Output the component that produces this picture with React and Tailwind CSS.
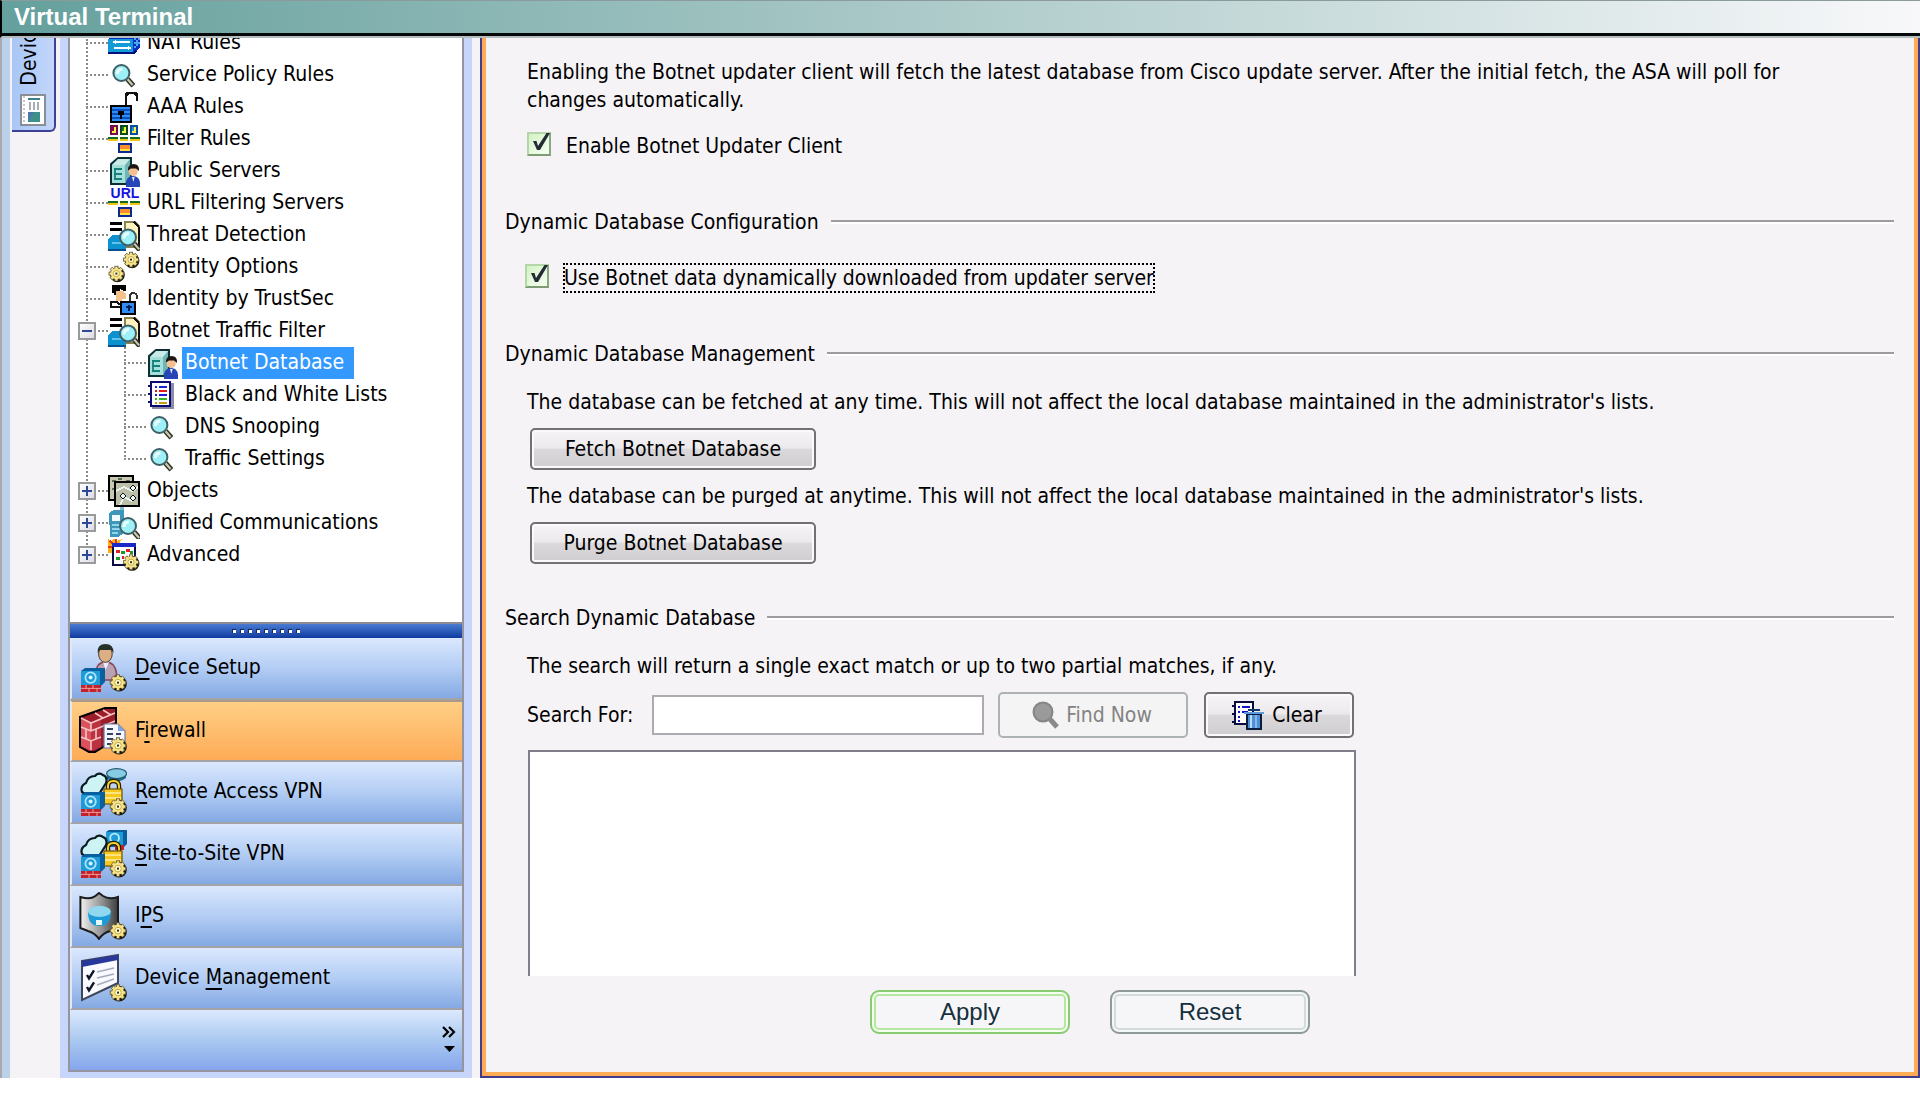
import { useState } from 'react';
import clsx from 'clsx';

// ---------- shared icon parts ----------

function Gear({ cx, cy, r = 3 }) {
  const teeth = [0, 45, 90, 135, 180, 225, 270, 315];
  return (
    <g transform={`translate(${cx} ${cy})`} shapeRendering="auto">
      <circle cx={0.5} cy={0.6} r={r + 0.9} fill="#1c1a12" />
      {teeth.map((a) => (
        <rect key={a} x={-0.8} y={-r - 0.9} width={1.6} height={2} fill="#f3e08c" stroke="#5c5330" strokeWidth={0.4} transform={`rotate(${a})`} />
      ))}
      <circle r={r} fill="#f5e389" />
      <circle r={r * 0.55} fill="#fffbd6" stroke="#c9a93a" strokeWidth={0.5} />
      <rect x={-0.5} y={-0.5} width={1} height={1} fill="#3a3005" />
    </g>
  );
}

function Lens({ cx, cy, r = 4 }) {
  const d = r * 0.75;
  return (
    <g shapeRendering="auto">
      <path d={`M${cx + d} ${cy + d}l3 3.400`} stroke="#2f3326" strokeWidth={2.6} />
      <path d={`M${cx + d} ${cy + d}l2.600 3`} stroke="#c9c9b4" strokeWidth={1.1} />
      <circle cx={cx} cy={cy} r={r} fill="#9df0f6" stroke="#3f5f66" strokeWidth={1} />
      <path d={`M${cx - 2} ${cy + 0.5}q0 -2.500 2.500 -2.500`} fill="none" stroke="#eaffff" strokeWidth={1.6} />
    </g>
  );
}

function Icon16({ children }) {
  return (
    <svg viewBox="0 0 16 16" className="size-8 shrink-0" shapeRendering="crispEdges" aria-hidden="true">
      {children}
    </svg>
  );
}

function Icon24({ children }) {
  return (
    <svg viewBox="0 0 24 24" className="size-12 shrink-0" aria-hidden="true">
      {children}
    </svg>
  );
}

// ---------- tree icons ----------

const NatIcon = () => (
  <Icon16>
    <path d="M0 6l3-3h13v7l-3 3.500H0z" fill="#0b2fc4" />
    <path d="M0 6h12.500v6.500H0z" fill="#139bd8" />
    <path d="M13 5.500h1v1h1v-1h1v1h-1v1h1v1h-1v1h-1v1h-1v-1h1v-1h-1v-1h1v-1h-1z" fill="#49a7ee" />
    <path d="M3 7.500h8M3 10.500h8" stroke="#fff" strokeWidth="1" />
    <path d="M2 7.500l2-1v2zM12 10.500l-2-1v2z" fill="#fff" />
    <path d="M0 13h13l1-1" stroke="#00107c" fill="none" />
  </Icon16>
);

const SearchIcon = () => (
  <Icon16>
    <Lens cx={6.7} cy={7} r={4} />
  </Icon16>
);

const LockIcon = () => (
  <Icon16>
    <path d="M9 7V2.500q0-1.500 1.500-1.500h2.500q1.500 0 1.500 1.500V5" fill="none" stroke="#111" strokeWidth="1.400" />
    <rect x="1.500" y="7.500" width="10" height="8" fill="#2f8cf5" stroke="#000" />
    <path d="M2 9.500h9M2 11.500h9M2 13.500h9" stroke="#0a4fc0" strokeWidth=".6" />
    <path d="M5 10h3v2h-1v2h-1v-2h-1z" fill="#000" />
  </Icon16>
);

const FilterLine = () => (
  <g>
    <path d="M0 7.500h5M6 7.500h4M11 7.500h5" stroke="#0f6b1f" />
    <path d="M0 8.400h5M6 8.400h4M11 8.400h5" stroke="#f0c419" strokeWidth=".9" />
    <rect x="5.500" y="10.500" width="6" height="4" fill="#ffe23a" stroke="#0b2a94" />
    <rect x="6" y="11" width="5" height="2" fill="#ff8b2c" />
  </g>
);

const FilterIcon = () => (
  <Icon16>
    <rect x="1.500" y="1.500" width="3" height="4" fill="#fff04a" stroke="#7b0a4f" />
    <rect x="6.500" y="1.500" width="3" height="4" fill="#fff04a" stroke="#0a4b1a" />
    <rect x="11.500" y="1.500" width="3" height="4" fill="#fff04a" stroke="#0a4e9d" />
    <path d="M2 2h1v2H2z" fill="#7b0a4f" />
    <path d="M7 2h1v2H7z" fill="#0a7b2a" />
    <path d="M12 2h1v2h-1z" fill="#2a8ee0" />
    <FilterLine />
  </Icon16>
);

const ServerIcon = () => (
  <Icon16>
    <g shapeRendering="auto">
      <path d="M1.500 4.500L5 1.500h6.500V12L9 14.500H1.500z" fill="#6fb5b5" stroke="#0c2f33" />
      <path d="M2 5h6.500v9H2z" fill="#a3dfdb" />
      <path d="M5 2h6L8.500 5H2.200z" fill="#c9ebe8" />
      <path d="M3 7h4M3 9.500h4M3 12h4M3.500 7v5" stroke="#16807c" strokeWidth=".9" fill="none" />
      <path d="M9 16q-.5-5.500 3.500-5.500T16 16z" fill="#2546b4" />
      <circle cx="12.600" cy="8.200" r="2.300" fill="#f3bf93" />
      <path d="M10 7.800Q9.800 4.500 12.800 4.500T15.500 8L14 6.700h-2.500z" fill="#1d1512" />
      <path d="M12 11h1.300l-.6 2.500z" fill="#e8eeff" />
    </g>
  </Icon16>
);

const UrlIcon = () => (
  <Icon16>
    <text x="8.500" y="5.700" textAnchor="middle" fontSize="7" fontWeight="700" fill="#1414e0" fontFamily="Liberation Sans, sans-serif">
      URL
    </text>
    <FilterLine />
  </Icon16>
);

const ThreatIcon = () => (
  <Icon16>
    <path d="M1 1.500h6v1.500H1zM1 4.500h6V6H1z" fill="#000" />
    <path d="M8.500 1.500h5l2 2V14h-7z" fill="#fff3bd" stroke="#8a8250" />
    <path d="M13 1.500l2.500 2.500M15.500 4v10" stroke="#111" />
    <path d="M2 8h7v7.500H0V10z" fill="#0c93cf" />
    <path d="M0 15.500h9" stroke="#08508c" />
    <path d="M2 12h5" stroke="#5cc4ee" />
    <Lens cx={10} cy={9.2} r={4} />
  </Icon16>
);

const GearsIcon = () => (
  <Icon16>
    <Gear cx={11.5} cy={4.3} r={2.8} />
    <Gear cx={4.2} cy={11.3} r={2.8} />
  </Icon16>
);

const TrustSecIcon = () => (
  <Icon16>
    <path d="M2 1h7v3H8L6 3v3H3V5H2z" fill="#000" />
    <path d="M4 4h4v1h1v3H7v1H4z" fill="#f5c08a" />
    <path d="M1.500 12V9.500h3L6 11" fill="none" stroke="#111" />
    <path d="M1 12h5" stroke="#111" />
    <path d="M11 9V6.500Q11 5 12.500 5t2 1.500V8" fill="none" stroke="#333" />
    <rect x="6.500" y="9.500" width="7" height="6" fill="#2f8cf5" stroke="#000" />
    <path d="M9 12h3M10.500 11v3" stroke="#021f57" />
  </Icon16>
);

const ListIcon = () => (
  <Icon16>
    <path d="M3 2h11v13H3z" fill="#8b8ba5" />
    <path d="M2.500 1.500h9.500v12H2.500z" fill="#fff" stroke="#0b0b73" />
    <path d="M1 3.500h2M1 7.500h2M1 11.500h2" stroke="#0b0b73" />
    <path d="M4.500 4h1M6.500 4h4" stroke="#2020d8" />
    <path d="M4.500 6h1M6.500 6h4" stroke="#e31b1b" />
    <path d="M4.500 8h1M6.500 8h4" stroke="#1c1cd8" />
    <path d="M4.500 10h1M6.500 10h4" stroke="#35b821" />
    <path d="M4.500 12h1M6.500 12h4" stroke="#c5a112" />
  </Icon16>
);

const ObjectsIcon = () => (
  <Icon16>
    <rect x=".5" y=".5" width="12" height="12" fill="#c8c8ae" stroke="#000" />
    <path d="M2 3h2M5 2h2M9 3h2M2 7h1" stroke="#5b6e5b" />
    <rect x="3.500" y="3.500" width="12" height="12" fill="#bcc0a8" stroke="#000" />
    <path d="M4 8l4-2 4 2 3-2M6 15l2-4 4 2" stroke="#eef4ee" fill="none" />
    <path d="M12.500 5l1.500 1.500L12.500 8 11 6.500zM7.500 9L9 10.500 7.500 12 6 10.500zM12.500 10l1.500 1.500-1.500 1.500-1.500-1.500z" fill="#eafcff" stroke="#111" strokeWidth=".6" />
  </Icon16>
);

const PhoneIcon = () => (
  <Icon16>
    <path d="M6 0h2v3H6z" fill="#7bbbe0" />
    <path d="M.5 3L3 1.500h5V13L5 15H1z" fill="#3e96b8" />
    <path d="M2 4h4v3H2z" fill="#f1fbff" />
    <path d="M2 9h4M2 11h4M2 13h3" stroke="#8fd5ec" strokeWidth=".8" />
    <Lens cx={10} cy={9.5} r={4} />
  </Icon16>
);

const AdvancedIcon = () => (
  <Icon16>
    <path d="M0 0l2 1 1-2 1 2 3-1-2 3-3 2v2H0V4z" fill="#f7b21a" />
    <path d="M1 1l2 2M4 0v3M0 4h3" stroke="#e6321e" strokeWidth=".8" />
    <rect x="2.500" y="2.500" width="11" height="10.500" fill="#fff" stroke="#0b0b46" />
    <path d="M2 3h12" stroke="#1a28c8" strokeWidth="1.600" />
    <path d="M4 6h2M9 5.500h2M7 9h1" stroke="#e32020" strokeWidth="1.500" />
    <path d="M6.500 6.500h2M4 9.500h2M11 6.500h1.500" stroke="#1b9b2c" strokeWidth="1.500" />
    <Gear cx={11.5} cy={11.6} r={2.8} />
  </Icon16>
);

// ---------- navigation icons ----------

const AsaBox = () => (
  <g>
    <path d="M1 13.500l2-1.500h10v7l-2 2H1z" fill="#0a5f9e" />
    <path d="M1 13.500h9.500v7H1z" fill="#1e9bd7" />
    <circle cx="5.800" cy="16.800" r="2.600" fill="none" stroke="#a9e5ff" strokeWidth=".9" />
    <circle cx="5.800" cy="16.800" r="1" fill="#d9f5ff" />
    <path d="M1 20.500h10V24H1z" fill="#c3222b" />
    <path d="M1 22.200h10M3.500 20.500v1.700M7 20.500v1.700M5 22.200V24M9 22.200V24" stroke="#f6b9b4" strokeWidth=".4" />
  </g>
);

const Cloud = () => (
  <path d="M1.500 12q-1-3 2-4.500Q4.500 4 8 4q1.500-2 4-.5 2.500 1 1.500 4L10 13H3z" fill="#cdf3f5" stroke="#0a1c20" strokeWidth="1.100" />
);

const Padlock = () => (
  <g>
    <path d="M14.500 11V9q0-2.500 2.700-2.500T20 9v2" fill="none" stroke="#241c02" strokeWidth="2.200" />
    <path d="M14.500 11V9q0-2.500 2.700-2.500T20 9v2" fill="none" stroke="#f5cf2b" strokeWidth="1" />
    <rect x="12.500" y="10.500" width="9" height="7.500" fill="#f7c71f" stroke="#6f5204" strokeWidth=".6" />
    <path d="M13 12.500h8M13 15h8" stroke="#fff0a0" strokeWidth=".8" />
  </g>
);

const DeviceSetupIcon = () => (
  <Icon24>
    <path d="M8.500 15q0-6 4.800-6t5.500 6l-2 3h-6z" fill="#b9a2b4" stroke="#8b4656" strokeWidth=".8" />
    <path d="M12 9l1.300 4L15 9z" fill="#eef" />
    <ellipse cx="13.200" cy="5" rx="3.400" ry="4.200" fill="#dcae84" stroke="#4b3c30" strokeWidth=".5" />
    <path d="M9.300 4.500Q9 0 13.200 0t4.100 4.500L16 3h-5.500z" fill="#263026" />
    <AsaBox />
    <Gear cx={19.5} cy={19.3} r={3} />
  </Icon24>
);

const FirewallIcon = () => (
  <Icon24>
    <path d="M.5 5L13 .5h5.500V16L8 22.500H5L.5 20z" fill="#9c1c2a" stroke="#000" strokeWidth="1" />
    <path d="M1 6l5 2v14l-5-2.500z" fill="#d9525e" />
    <path d="M6 8l5-2v14l-5 2z" fill="#b8333f" />
    <path d="M1 10l5 2 5-2M1 15l5 2 5-2M1 5.500L6 8l12-5M6 8v4M3.500 11v5M8.500 11v5M6 17v4.500M8 3l4 2.500M12 1.500L16 4M11 10l7-3" fill="none" stroke="#f6c2c2" strokeWidth=".8" />
    <path d="M12.500 8.500h7l3.500 3.500v8.500H12.500z" fill="#f4f7ff" stroke="#6c7a9c" strokeWidth=".6" />
    <path d="M19.500 8.500V12H23z" fill="#7fa3dc" />
    <path d="M14 11h3M14 13.500h3M14 16h3M14 18.500h2M18.500 13.500h2.500" stroke="#38435f" strokeWidth="1" />
    <Gear cx={19.5} cy={19.3} r={3} />
  </Icon24>
);

const RemoteVpnIcon = () => (
  <Icon24>
    <path d="M14 3v2.500q4.500 3 9.500-.5V2.500z" fill="#1d6e94" />
    <ellipse cx="18.800" cy="2.800" rx="5" ry="2.500" fill="#86cbe4" stroke="#245a6e" strokeWidth=".6" />
    <Cloud />
    <Padlock />
    <AsaBox />
    <Gear cx={19.5} cy={19.3} r={3} />
  </Icon24>
);

const SiteVpnIcon = () => (
  <Icon24>
    <path d="M13.500 1l1.500-1h9v7l-1.500 1.500h-9z" fill="#0a5f9e" />
    <path d="M13.500 1H22v6.500h-8.500z" fill="#1e9bd7" />
    <circle cx="17.800" cy="4" r="2.200" fill="none" stroke="#b8eaff" strokeWidth=".9" />
    <path d="M18 7.500h4.500V10H18z" fill="#c3222b" />
    <Cloud />
    <Padlock />
    <AsaBox />
    <Gear cx={19.5} cy={19.3} r={3} />
  </Icon24>
);

const IpsIcon = () => (
  <Icon24>
    <defs>
      <linearGradient id="shield" x1="0" x2="1">
        <stop offset="0" stopColor="#f2f2f2" />
        <stop offset=".6" stopColor="#8c8c8c" />
        <stop offset="1" stopColor="#3c3c3c" />
      </linearGradient>
    </defs>
    <path d="M.7 2.500q5 1.500 7.500-.5L10 .5 12 2q3 2 7.500.5V18l-4 1.500q-3.500 1-5.500 4-2-3-5.500-4L.7 18z" fill="url(#shield)" stroke="#1c1c1c" strokeWidth="1" />
    <path d="M4.500 10q0 7 5.700 7t5.800-7z" fill="#1d9bd6" />
    <ellipse cx="10.200" cy="9.700" rx="5.700" ry="2.800" fill="#8fd8ef" />
    <path d="M8.500 16.500v-2.500h3v2.500" fill="#e6f8ff" />
    <Gear cx={19.5} cy={19.3} r={3} />
  </Icon24>
);

const DeviceMgmtIcon = () => (
  <Icon24>
    <path d="M1.500 3.500L19.500 .5v14L1.500 23z" fill="#f8faff" stroke="#3f465c" strokeWidth="1" />
    <path d="M1.500 3.500L19.500 .5V3L1.500 6.500z" fill="#27379b" />
    <path d="M4 10.500l1 1.700 2.500-4M4 16.500l1 1.700 2.500-4" fill="none" stroke="#0c1322" strokeWidth="1.200" />
    <path d="M9 9l8.500-2M9 12l8.500-2M9 15.500l8.500-3" stroke="#a3abbd" strokeWidth=".7" />
    <Gear cx={19.5} cy={19.3} r={3} />
  </Icon24>
);

// ---------- data ----------

const TREE = [
  { label: 'NAT Rules', icon: NatIcon },
  { label: 'Service Policy Rules', icon: SearchIcon },
  { label: 'AAA Rules', icon: LockIcon },
  { label: 'Filter Rules', icon: FilterIcon },
  { label: 'Public Servers', icon: ServerIcon },
  { label: 'URL Filtering Servers', icon: UrlIcon },
  { label: 'Threat Detection', icon: ThreatIcon },
  { label: 'Identity Options', icon: GearsIcon },
  { label: 'Identity by TrustSec', icon: TrustSecIcon },
  {
    label: 'Botnet Traffic Filter',
    icon: ThreatIcon,
    open: true,
    children: [
      { label: 'Botnet Database', icon: ServerIcon },
      { label: 'Black and White Lists', icon: ListIcon },
      { label: 'DNS Snooping', icon: SearchIcon },
      { label: 'Traffic Settings', icon: SearchIcon },
    ],
  },
  { label: 'Objects', icon: ObjectsIcon, open: false },
  { label: 'Unified Communications', icon: PhoneIcon, open: false },
  { label: 'Advanced', icon: AdvancedIcon, open: false },
];

// `key` is the index of the mnemonic letter
const SECTIONS = [
  { label: 'Device Setup', key: 0, icon: DeviceSetupIcon },
  { label: 'Firewall', key: 1, icon: FirewallIcon },
  { label: 'Remote Access VPN', key: 0, icon: RemoteVpnIcon },
  { label: 'Site-to-Site VPN', key: 0, icon: SiteVpnIcon },
  { label: 'IPS', key: 1, icon: IpsIcon },
  { label: 'Device Management', key: 7, icon: DeviceMgmtIcon },
];

const DOTS_X = 'bg-[repeating-linear-gradient(90deg,#8a8a8a_0_2px,transparent_2px_4px)]';
const DOTS_Y = 'bg-[repeating-linear-gradient(180deg,#8a8a8a_0_2px,transparent_2px_4px)]';

// ---------- sidebar ----------

// Dotted connector in front of a row, with the optional +/- box on top
function Branch({ open, last }) {
  return (
    <span className="relative flex h-8 w-[22px] shrink-0 items-center">
      <span className={clsx('absolute left-0 top-0 w-[2px]', DOTS_Y, last ? 'h-4' : 'h-8')} />
      <span className={clsx('h-[2px] w-full', DOTS_X)} />
      {open !== undefined && (
        <span className="absolute -left-2 top-[7px] flex size-[18px] items-center justify-center border-2 border-[#9a9a9a] bg-gradient-to-br from-white to-[#dcdce4]">
          <span className="absolute h-[2px] w-[10px] bg-[#2b4796]" />
          {!open && <span className="absolute h-[10px] w-[2px] bg-[#2b4796]" />}
        </span>
      )}
    </span>
  );
}

function TreeItem({ item, last, selected, onSelect }) {
  const Icon = item.icon;
  const active = selected === item.label;
  return (
    <li>
      <div className="flex h-8 items-center">
        <Branch open={item.open} last={last} />
        <Icon />
        <button
          onClick={() => onSelect(item.label)}
          className={clsx('ml-1 h-8 whitespace-nowrap pl-[3px] pr-[10px]', active && 'bg-[#3399ff] text-white')}
        >
          {item.label}
        </button>
      </div>
      {item.children && (
        <div className="flex">
          <span className={clsx('w-[2px] shrink-0', DOTS_Y)} />
          <ul className="ml-9">
            {item.children.map((child, i) => (
              <TreeItem key={child.label} item={child} last={i === item.children.length - 1} selected={selected} onSelect={onSelect} />
            ))}
          </ul>
        </div>
      )}
    </li>
  );
}

function SectionButton({ section, active, onClick }) {
  const { label, key, icon: Icon } = section;
  return (
    <button
      onClick={onClick}
      className={clsx(
        'flex h-[62px] w-full items-center border-b-2 border-b-[#a3a3a8] border-l-2 border-l-[#e4e8f0] pl-[7px] text-left',
        active
          ? 'border-t-2 border-t-[#a89a8a] bg-gradient-to-b from-[#ffcf85] to-[#fdab55]'
          : 'bg-gradient-to-b from-[#dbe8fe] via-[#b3cdf4] to-[#84a9e3]'
      )}
    >
      <Icon />
      <span className="ml-2">
        {label.slice(0, key)}
        <u className="decoration-2 underline-offset-4">{label[key]}</u>
        {label.slice(key + 1)}
      </span>
    </button>
  );
}

function Sidebar() {
  const [selected, setSelected] = useState('Botnet Database');
  const [section, setSection] = useState('Firewall');

  return (
    <aside className="flex w-[412px] shrink-0 flex-col bg-[#c8d5fb] px-2 pb-[6px]">
      <div className="flex flex-1 flex-col border-x-2 border-b-2 border-[#94959f]">
        <div className="flex-1 overflow-hidden border-b-2 border-[#8a8b93] bg-white">
          <ul className="-mt-[11px] pl-4">
            {TREE.map((item, i) => (
              <TreeItem key={item.label} item={item} last={i === TREE.length - 1} selected={selected} onSelect={setSelected} />
            ))}
          </ul>
        </div>
        <div className="flex h-[14px] items-center justify-center gap-1 bg-gradient-to-b from-[#4a7bd2] to-[#0f3a9f]">
          {Array.from({ length: 9 }, (_, i) => (
            <span key={i} className="size-1 border-l border-t border-[#12285e] bg-white" />
          ))}
        </div>
        <nav>
          {SECTIONS.map((s) => (
            <SectionButton key={s.label} section={s} active={section === s.label} onClick={() => setSection(s.label)} />
          ))}
        </nav>
        <div className="flex h-[60px] items-center justify-end bg-gradient-to-b from-[#dce9fe] via-[#aac9f0] to-[#86a5ec] pr-[6px]">
          <button aria-label="Configure buttons">
            <svg viewBox="0 0 14 28" className="h-7 w-[14px]" aria-hidden="true">
              <path d="M1 1l5 5-5 5M7 1l5 5-5 5" fill="none" stroke="#000" strokeWidth="2.200" />
              <path d="M2 20h11l-5.500 6z" fill="#000" />
            </svg>
          </button>
        </div>
      </div>
    </aside>
  );
}

function DeviceTab() {
  return (
    <div className="w-[50px] shrink-0 pl-[2px]">
      <button className="flex h-[94px] w-11 flex-col items-center justify-end gap-2 overflow-hidden rounded-br-md border-b-2 border-r-2 border-[#3c4196] bg-gradient-to-r from-[#a8c6f6] to-[#c3d6fb] pb-1">
        <span className="mr-2 rotate-180 whitespace-nowrap leading-6 [writing-mode:vertical-rl]">Device List</span>
        <svg viewBox="0 0 26 32" className="h-8 w-[26px] shrink-0" aria-hidden="true">
          <rect x="1" y="1" width="24" height="30" fill="#fff" stroke="#8a8f94" strokeWidth="2" />
          <path d="M4 2v28" stroke="#c2c7cc" strokeWidth="2" strokeDasharray="2 2" />
          <path d="M8 5h12" stroke="#3b7f8a" strokeWidth="2" />
          <path d="M10 8v8M14 8v8M18 8v8" stroke="#a9adb4" strokeWidth="2" />
          <rect x="8" y="18" width="12" height="10" fill="#3f8f8a" />
          <path d="M8 28V18h6z" fill="#4a78a8" />
        </svg>
      </button>
    </div>
  );
}

// ---------- form ----------

function CheckBox({ id, label, defaultChecked, focused }) {
  return (
    <div className="flex h-7 items-start">
      <span className="grid size-6 shrink-0">
        <input
          id={id}
          type="checkbox"
          defaultChecked={defaultChecked}
          className="peer col-start-1 row-start-1 size-6 appearance-none border-2 border-[#b4d6a8] border-b-[#7d9c73] border-r-[#8aa882] bg-gradient-to-br from-[#d3f2c4] to-[#f8fff4]"
        />
        <svg viewBox="0 0 24 24" className="pointer-events-none col-start-1 row-start-1 hidden size-6 peer-checked:block" aria-hidden="true">
          <path d="M6 9h3.500l1.500 5L19.500 1H23L13 18h-3z" fill="#252b36" />
        </svg>
      </span>
      <label htmlFor={id} className={clsx('ml-[15px] leading-7', focused && 'outline-2 -outline-offset-1 outline-dotted outline-black')}>
        {label}
      </label>
    </div>
  );
}

function SectionTitle({ children }) {
  return (
    <h2 className="flex items-center gap-3 leading-7">
      {children}
      <span className="h-[4px] flex-1 border-b-2 border-t-2 border-b-white border-t-[#9d9ba0]" />
    </h2>
  );
}

const GRAY_BUTTON =
  'flex items-center justify-center rounded-[5px] border-2 border-[#737075] bg-[linear-gradient(#f6f4f6,#ebe9eb_48%,#dbd9db_50%,#cfcdcf)] shadow-[inset_0_0_0_2px_#fbfafb]';

function BotnetPanel() {
  const [query, setQuery] = useState('');

  return (
    <main className="min-w-0 flex-1 border-2 border-t-0 border-[#433c8c]">
      <div className="h-full border-4 border-t-0 border-[#fdab55] pb-[38px] pl-[19px] pr-5 pt-5">
        <p className="ml-[22px] mr-20 leading-7">
          Enabling the Botnet updater client will fetch the latest database from Cisco update server. After the initial fetch, the ASA will poll for changes automatically.
        </p>
        <div className="ml-[22px] mt-[18px]">
          <CheckBox id="enable-updater" label="Enable Botnet Updater Client" defaultChecked />
        </div>

        <section className="mt-12">
          <SectionTitle>Dynamic Database Configuration</SectionTitle>
          <div className="ml-5 mt-7">
            <CheckBox id="use-botnet" label="Use Botnet data dynamically downloaded from updater server" defaultChecked focused />
          </div>
        </section>

        <section className="mt-12">
          <SectionTitle>Dynamic Database Management</SectionTitle>
          <div className="ml-[22px] mt-5 flex flex-col items-start gap-3 leading-7">
            <p>The database can be fetched at any time. This will not affect the local database maintained in the administrator's lists.</p>
            <button className={clsx(GRAY_BUTTON, 'ml-[3px] h-[42px] w-[286px]')}>Fetch Botnet Database</button>
            <p>The database can be purged at anytime. This will not affect the local database maintained in the administrator's lists.</p>
            <button className={clsx(GRAY_BUTTON, 'ml-[3px] h-[42px] w-[286px]')}>Purge Botnet Database</button>
          </div>
        </section>

        <section className="mt-10">
          <SectionTitle>Search Dynamic Database</SectionTitle>
          <div className="ml-[22px] mt-5 flex flex-col items-start gap-3 leading-7">
            <p>The search will return a single exact match or up to two partial matches, if any.</p>
            <div className="flex items-center">
              <label htmlFor="search-for" className="w-[125px]">Search For:</label>
              <input
                id="search-for"
                value={query}
                onChange={(e) => setQuery(e.target.value)}
                className="h-10 w-[332px] border-2 border-[#adaab0] bg-white px-2 outline-none"
              />
              <button disabled className="ml-[14px] flex h-[46px] w-[190px] items-center justify-center gap-1 rounded-[5px] border-2 border-[#adb2b5] bg-[#f4f4f4] pr-1 text-[#838383]">
                <svg viewBox="0 0 32 32" className="size-8" aria-hidden="true">
                  <circle cx="13" cy="13" r="9.500" fill="#9a9a9a" stroke="#858585" strokeWidth="2" />
                  <path d="M19 19l8 9" stroke="#8a8a8a" strokeWidth="5" />
                </svg>
                Find Now
              </button>
              <button onClick={() => setQuery('')} className={clsx(GRAY_BUTTON, 'ml-4 h-[46px] w-[150px] gap-2 pr-1')}>
                <svg viewBox="0 0 16 16" className="size-8" shapeRendering="crispEdges" aria-hidden="true">
                  <path d="M1.500 1.500h9v11h-9z" fill="#fff" stroke="#0b0b40" />
                  <path d="M0 3.500h2M0 7.500h2M0 11.500h2" stroke="#0b0b40" />
                  <path d="M3 4h1M5 4h4M3 6.500h1M5 6.500h3M3 9h1M3 11h1" stroke="#1515c8" />
                  <path d="M7.500 7.500h7V15h-7z" fill="#4f8fd4" stroke="#0b1c3c" />
                  <path d="M9.500 8v6.500" stroke="#b9dcf8" />
                  <path d="M12 8v6.500" stroke="#86b8ea" />
                  <path d="M6 7h10" stroke="#5f9bdc" />
                  <path d="M8 5.500h6" stroke="#12386e" />
                </svg>
                Clear
              </button>
            </div>
            <textarea aria-label="Search results" readOnly className="ml-px h-[226px] w-[828px] resize-none border-2 border-b-0 border-[#7f7e8a] bg-white outline-none" />
          </div>
        </section>

        <div className="ml-[365px] mt-[14px] flex gap-10 font-['Liberation_Sans',Arial,sans-serif] text-2xl text-[#152f3c]">
          <button className="h-11 w-[200px] rounded-[9px] border-2 border-[#86cc72] bg-[#f6f6f8] shadow-[inset_0_0_0_2px_#f4fff0,inset_0_0_0_4px_#b5e6a2]">
            Apply
          </button>
          <button className="h-11 w-[200px] rounded-[9px] border-2 border-[#919a9b] bg-[#f6f6f8] shadow-[inset_0_0_0_2px_#f3f7f7,inset_0_0_0_4px_#d3dbdd]">
            Reset
          </button>
        </div>
      </div>
    </main>
  );
}

export default function App() {
  return (
    <div className="flex min-h-screen flex-col bg-white pb-4 font-['DejaVu_Sans_Condensed','DejaVu_Sans',Tahoma,sans-serif] text-[21px] text-black">
      <header className="flex h-[38px] items-center border-b-2 border-l-2 border-t border-b-[#b5bcbd] border-l-black border-t-[#8b9a9a] bg-gradient-to-r from-[#64a09d] to-[#f8f8fa] pl-3 shadow-[inset_0_-3px_0_#050808]">
        <h1 className="pb-[3px] font-['Liberation_Sans',Arial,sans-serif] text-2xl font-bold leading-8 text-white">Virtual Terminal</h1>
      </header>
      <div className="flex flex-1 border-l-2 border-[#a9a9ad] bg-[#f6f3f7]">
        <div className="w-2 shrink-0 bg-[#bad1e9]" />
        <DeviceTab />
        <Sidebar />
        <div className="w-2 shrink-0" />
        <BotnetPanel />
      </div>
    </div>
  );
}
